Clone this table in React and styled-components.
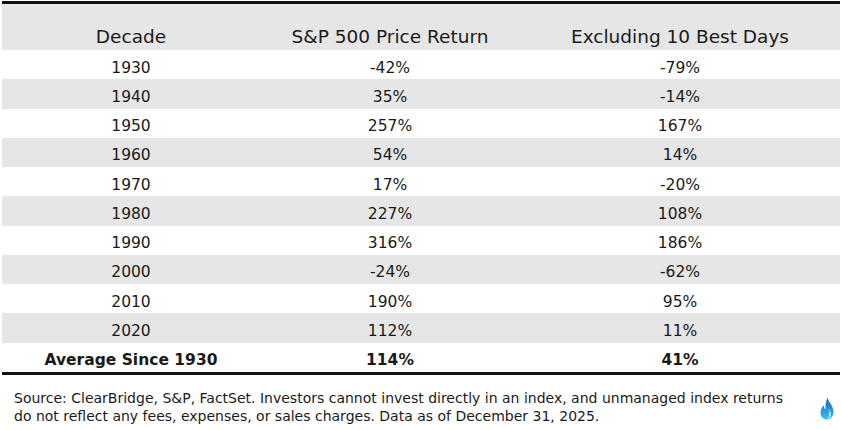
import React from "react";
import styled, { createGlobalStyle } from "styled-components";

const Global = createGlobalStyle`
  html, body { margin: 0; padding: 0; background: #fff; }
  body { font-family: "DejaVu Sans", "Liberation Sans", sans-serif; color: #1a1a1a; }
`;

const Page = styled.div`
  width: 842px;
  height: 430px;
  padding: 1px 2px 0 2px;
  box-sizing: border-box;
`;

const Table = styled.div`
  display: grid;
  grid-template-columns: 258px 260px 320px;
  border-top: 3px solid #111;
  border-bottom: 3px solid #111;
`;

const Cell = styled.div`
  display: flex;
  align-items: center;
  justify-content: center;
  height: ${p => (p.$head ? "46px" : "29.27px")};
  padding-top: ${p => (p.$head ? "19px" : "6px")};
  box-sizing: border-box;
  background: ${p => (p.$shade ? "#e6e6e6" : "#fff")};
  font-size: ${p => (p.$head ? "18.5px" : "15.5px")};
  font-weight: ${p => (p.$bold ? 700 : 400)};
  white-space: nowrap;
`;

const Footer = styled.div`
  display: flex;
  align-items: flex-start;
  justify-content: space-between;
  padding: 14px 6px 0 12px;
`;

const Note = styled.p`
  margin: 0;
  font-size: 14px;
  line-height: 18px;
  color: #1a1a1a;
  white-space: nowrap;
`;

const Flame = styled.svg`
  width: 14px;
  height: 23px;
  margin-top: 8px;
`;

const rows = [
  ["1930", "-42%", "-79%"],
  ["1940", "35%", "-14%"],
  ["1950", "257%", "167%"],
  ["1960", "54%", "14%"],
  ["1970", "17%", "-20%"],
  ["1980", "227%", "108%"],
  ["1990", "316%", "186%"],
  ["2000", "-24%", "-62%"],
  ["2010", "190%", "95%"],
  ["2020", "112%", "11%"],
];

export default function App() {
  return (
    <Page>
      <Global />
      <Table>
        <Cell $head $shade>Decade</Cell>
        <Cell $head $shade>S&amp;P 500 Price Return</Cell>
        <Cell $head $shade>Excluding 10 Best Days</Cell>
        {rows.map((r, i) =>
          r.map((v, j) => (
            <Cell key={i + "-" + j} $shade={i % 2 === 1}>{v}</Cell>
          ))
        )}
        <Cell $bold>Average Since 1930</Cell>
        <Cell $bold>114%</Cell>
        <Cell $bold>41%</Cell>
      </Table>
      <Footer>
        <Note>
          Source: ClearBridge, S&amp;P, FactSet. Investors cannot invest directly in an index, and unmanaged index returns
          <br />
          do not reflect any fees, expenses, or sales charges. Data as of December 31, 2025.
        </Note>
        <Flame viewBox="0 0 14 23">
          <defs>
            <linearGradient id="fl" x1="0" y1="0" x2="0" y2="1">
              <stop offset="0" stopColor="#1565b0" />
              <stop offset="0.6" stopColor="#2a9ad8" />
              <stop offset="1" stopColor="#3cc3e6" />
            </linearGradient>
          </defs>
          <path d="M7.5 0.5 C8 5 13.5 8 13.5 15 C13.5 19.5 10.5 22.5 7 22.5 C3 22.5 0.5 19.5 0.5 15.5 C0.5 12 2.5 10 3.5 8 C4 10.5 4.5 12 5.5 12.5 C5 8.5 6 4 7.5 0.5 Z" fill="url(#fl)" />
          <path d="M8.5 11.5 C10 14 11.5 16 11 18.5 C10.5 20.5 9 21.5 7.5 21.8 C9 19.5 9.5 16 8.5 11.5 Z" fill="#b9ecf7" opacity="0.85" />
        </Flame>
      </Footer>
    </Page>
  );
}
